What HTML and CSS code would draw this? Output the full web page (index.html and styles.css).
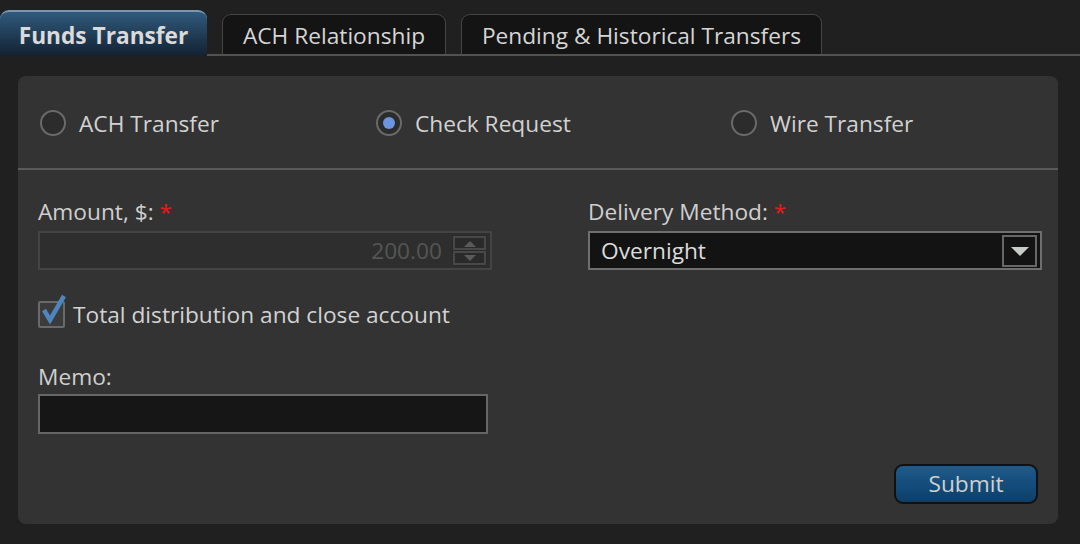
FILE: index.html
```html
<!DOCTYPE html>
<html>
<head>
<meta charset="utf-8">
<link rel="stylesheet" href="styles.css">
</head>
<body>
<div class="tabbar">
  <div class="tab active">Funds Transfer</div>
  <div class="tab">ACH Relationship</div>
  <div class="tab">Pending &amp; Historical Transfers</div>
</div>
<div class="panel">
  <div class="radios">
    <label class="radio r1"><span class="dot"></span>ACH Transfer</label>
    <label class="radio r2"><span class="dot on"></span>Check Request</label>
    <label class="radio r3"><span class="dot"></span>Wire Transfer</label>
  </div>
  <div class="form">
    <div class="col left">
      <div class="label">Amount, $: <span class="req">*</span></div>
      <div class="amount">
        <span class="val">200.00</span>
        <span class="spin">
          <span class="sb"><svg width="14" height="7" viewBox="0 0 14 7"><polygon points="1,7 7,1 13,7" fill="#5a5a5a"/></svg></span>
          <span class="sb"><svg width="14" height="7" viewBox="0 0 14 7"><polygon points="1,0 7,6 13,0" fill="#5a5a5a"/></svg></span>
        </span>
      </div>
      <div class="check">
        <span class="box"><svg width="30" height="34" viewBox="0 0 30 34"><path d="M6 17 L12 27 L26 3" fill="none" stroke="#4d86be" stroke-width="4.5" stroke-linejoin="miter"/></svg></span>
        <span>Total distribution and close account</span>
      </div>
      <div class="label memo-label">Memo:</div>
      <div class="memo"></div>
    </div>
    <div class="col right">
      <div class="label">Delivery Method: <span class="req">*</span></div>
      <div class="select">
        <span>Overnight</span>
        <span class="arrow"><svg width="20" height="10" viewBox="0 0 20 10"><polygon points="1,1 19,1 10,10" fill="#c8ccc8"/></svg></span>
      </div>
      <div class="actions"><button class="submit">Submit</button></div>
    </div>
  </div>
</div>
</body>
</html>
```
FILE: styles.css
```css
* { box-sizing: border-box; }
html, body { margin: 0; padding: 0; }
body {
  background: #202020;
  width: 1080px;
  height: 544px;
  overflow: hidden;
  font-family: "Open Sans", "Noto Sans", sans-serif;
  color: #d2d2d2;
  font-size: 22.7px;
}
.tabbar {
  display: flex;
  align-items: flex-end;
  gap: 15px;
  padding-top: 10px;
  height: 56px;
  border-bottom: 2px solid #525252;
}
.tab {
  height: 40px;
  padding: 2px 0 0;
  white-space: nowrap;
  background: #141414;
  border: 1px solid #454545;
  border-bottom: none;
  border-radius: 9px 9px 0 0;
  display: flex;
  align-items: center;
  justify-content: center;
  color: #d6d6d6;
  flex: none;
}
.tab:nth-child(2) { width: 224px; }
.tab:nth-child(3) { width: 361px; }
.tab.active {
  height: 46px;
  margin-bottom: -2px;
  width: 207px;
  font-weight: 700;
  background: linear-gradient(#305a7c, #1b3248 70%, #142232);
  border: none;
  border-top: 2px solid #7b97b2;
  color: #dadada;
}
.panel {
  margin: 20px 22px 0 18px;
  height: 448px;
  background: #333333;
  border-radius: 8px;
}
.radios {
  display: flex;
  align-items: center;
  height: 94px;
  border-bottom: 2px solid #5a5a5a;
  padding-left: 22px;
  padding-top: 2px;
}
.radio {
  display: flex;
  align-items: center;
  gap: 13px;
  color: #d2d2d2;
}
.r1 { width: 336px; }
.r2 { width: 355px; }
.dot {
  width: 26px;
  height: 26px;
  border-radius: 50%;
  border: 2px solid #6a6a6a;
  background: #2c2c2c;
  display: flex;
  align-items: center;
  justify-content: center;
}
.dot.on::after {
  content: "";
  width: 12px;
  height: 12px;
  border-radius: 50%;
  background: #6b95dc;
}
.form {
  display: flex;
  gap: 96px;
  padding: 27px 16px 0 20px;
}
.col { width: 454px; display: flex; flex-direction: column; }
.label { height: 30px; line-height: 30px; color: #cfcfcf; }
.req { color: #e51a1a; }
.amount {
  margin-top: 4px;
  height: 39px;
  border: 2px solid #444;
  background: #2e2e2e;
  display: flex;
  align-items: center;
  justify-content: flex-end;
  padding-right: 3px;
}
.val { color: #555; margin-right: 10px; }
.spin {
  width: 35px;
  height: 31px;
  background: #2a2a2a;
  display: flex;
  flex-direction: column;
  gap: 1px;
  padding: 1px;
}
.sb {
  flex: 1;
  border: 2px solid #484848;
  display: flex;
  align-items: center;
  justify-content: center;
}
.check {
  margin-top: 30px;
  display: flex;
  align-items: center;
  gap: 8px;
  height: 28px;
}
.box {
  position: relative;
  width: 27px;
  height: 27px;
  border: 2px solid #6a6a6a;
  border-radius: 2px;
  background: #3b3b3b;
  flex: none;
}
.box svg { position: absolute; left: -2px; top: -10px; }
.memo-label { margin-top: 34px; }
.memo {
  margin-top: 2px;
  width: 450px;
  height: 40px;
  border: 2px solid #666;
  background: #161616;
}
.select {
  margin-top: 4px;
  height: 39px;
  border: 2px solid #6f6f6f;
  background: #131313;
  display: flex;
  align-items: center;
  justify-content: space-between;
  padding-left: 11px;
  padding-right: 3px;
  color: #dcdcdc;
}
.arrow {
  width: 35px;
  height: 32px;
  border: 2px solid #676767;
  display: flex;
  align-items: center;
  justify-content: center;
}
.actions {
  margin-top: 194px;
  display: flex;
  justify-content: flex-end;
  padding-right: 4px;
}
.submit {
  width: 144px;
  height: 40px;
  border: 2px solid #111;
  border-radius: 9px;
  background: linear-gradient(#1f5b8b, #124a78 60%, #0e3f68);
  color: #d0d0d0;
  font-family: inherit;
  font-size: 22.7px;
  padding: 0 0 2px;
}
```
